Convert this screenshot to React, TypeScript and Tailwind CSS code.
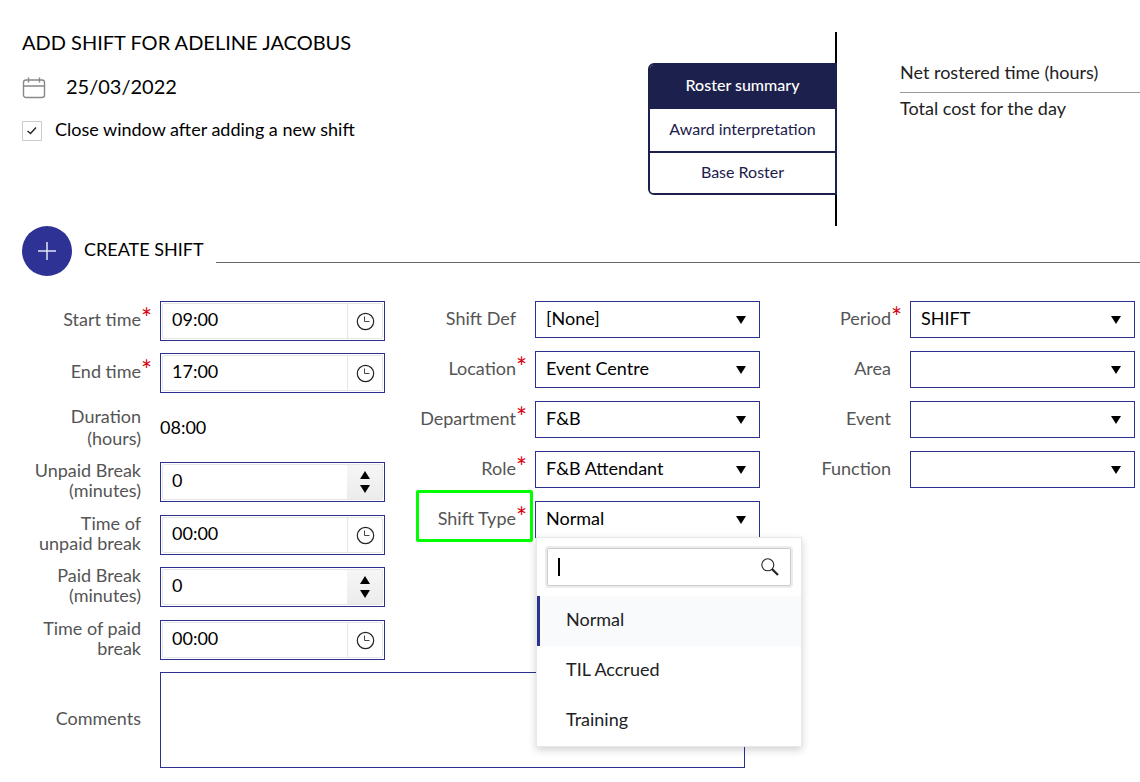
import { useState } from "react";
import type { ReactNode } from "react";

const SHIFT_TYPES = ["Normal", "TIL Accrued", "Training"];

const TABS = ["Roster summary", "Award interpretation", "Base Roster"];

interface FieldProps {
  id: string;
  label: string;
  required?: boolean;
  children: ReactNode;
}

function FieldLabel({ id, label, required }: Omit<FieldProps, "children">) {
  return (
    <label htmlFor={id} className="relative -mt-1 w-[131px] shrink-0 pl-4 text-right leading-5 text-[#555]">
      {label}
      {required && (
        <span aria-hidden="true" className="absolute -top-px left-full text-[26px] leading-5 text-[#d8000c]">
          *
        </span>
      )}
    </label>
  );
}

function Field({ id, label, required, children }: FieldProps) {
  return (
    <div className="flex items-center gap-[19px]">
      <FieldLabel id={id} label={label} required={required} />
      <div className="relative min-w-0 flex-1">{children}</div>
    </div>
  );
}

function Triangle({ up }: { up?: boolean }) {
  return (
    <svg width="10" height="8" viewBox="0 0 10 8" aria-hidden="true">
      <path d={up ? "M0 8L5 0L10 8Z" : "M0 0H10L5 8Z"} fill="#000" />
    </svg>
  );
}

function ClockIcon() {
  return (
    <svg width="19" height="19" viewBox="0 0 19 19" fill="none" stroke="#222" aria-hidden="true">
      <circle cx="9.5" cy="9.5" r="8.2" strokeWidth="1.2" />
      <path d="M8.5 4.5V9.5H13.5" stroke="#444" />
    </svg>
  );
}

function TimeField({ id, label, required, initial }: { id: string; label: string; required?: boolean; initial: string }) {
  const [value, setValue] = useState(initial);
  return (
    <Field id={id} label={label} required={required}>
      <div className="h-10 border border-[#2b3091] p-px">
        <div className="flex h-full rounded-xs border border-[#e6e6e6]">
          <input
            id={id}
            type="text"
            required={required}
            value={value}
            onChange={(e) => setValue(e.target.value)}
            className="min-w-0 flex-1 px-[9px] pb-1 outline-none"
          />
          <button
            type="button"
            aria-label={`Pick ${label.toLowerCase()}`}
            className="flex w-[35px] items-center justify-center border-l border-[#e6e6e6]"
          >
            <ClockIcon />
          </button>
        </div>
      </div>
    </Field>
  );
}

function MinutesField({ id, label }: { id: string; label: string }) {
  const [value, setValue] = useState(0);
  return (
    <Field id={id} label={label}>
      <div className="h-10 border border-[#2b3091] p-px">
        <div className="flex h-full rounded-xs border border-[#e6e6e6]">
          <input
            id={id}
            type="text"
            inputMode="numeric"
            value={value}
            onChange={(e) => setValue(Number(e.target.value) || 0)}
            className="min-w-0 flex-1 px-[9px] pb-1 outline-none"
          />
          <div className="flex w-[35px] flex-col bg-linear-to-b from-[#f6f6f6] to-[#ececec]">
            <button
              type="button"
              aria-label="Increase minutes"
              onClick={() => setValue((v) => v + 1)}
              className="flex flex-1 items-end justify-center pb-[3px]"
            >
              <Triangle up />
            </button>
            <button
              type="button"
              aria-label="Decrease minutes"
              onClick={() => setValue((v) => Math.max(0, v - 1))}
              className="flex flex-1 items-start justify-center pt-[3px]"
            >
              <Triangle />
            </button>
          </div>
        </div>
      </div>
    </Field>
  );
}

function SelectField({ id, label, required, option = "" }: { id: string; label: string; required?: boolean; option?: string }) {
  return (
    <Field id={id} label={label} required={required}>
      <select
        id={id}
        required={required}
        className="block h-[37px] w-full appearance-none border border-[#2b3091] bg-white px-[10px] pb-[3px] outline-none"
      >
        <option>{option}</option>
      </select>
      <span className="pointer-events-none absolute inset-y-0 right-[14px] flex items-center">
        <Triangle />
      </span>
    </Field>
  );
}

function ShiftTypeField() {
  const [value, setValue] = useState("Normal");
  const [query, setQuery] = useState("");
  const [open, setOpen] = useState(true);

  const matches = SHIFT_TYPES.filter((t) => t.toLowerCase().includes(query.toLowerCase()));

  return (
    <div className="relative">
      <div className="absolute -top-[11px] -bottom-1 left-[31px] w-[117px] rounded-xs border-3 border-[#00ff00]" />
      <Field id="shift-type" label="Shift Type" required>
        <select
          id="shift-type"
          required
          value={value}
          onChange={(e) => setValue(e.target.value)}
          onMouseDown={(e) => {
            e.preventDefault();
            setOpen((o) => !o);
          }}
          className="block h-[37px] w-full appearance-none border border-[#2b3091] bg-white px-[10px] pb-[3px] outline-none"
        >
          {SHIFT_TYPES.map((type) => (
            <option key={type}>{type}</option>
          ))}
        </select>
        <span className="pointer-events-none absolute inset-y-0 right-[14px] flex items-center">
          <Triangle />
        </span>

        {open && (
          <div className="absolute top-9 left-px z-10 w-[266px] border border-[#e8e8e8] bg-white shadow-[0_3px_8px_rgba(0,0,0,0.18)]">
            <div className="relative m-[10px] flex h-[38px] items-center rounded-xs border border-[#ccc] pr-[11px] shadow-[0_0_0_2px_#ececec]">
              <input
                type="text"
                aria-label="Search shift types"
                value={query}
                onChange={(e) => setQuery(e.target.value)}
                className="min-w-0 flex-1 px-[10px] outline-none"
              />
              {query === "" && <span className="pointer-events-none absolute left-[10px] h-[18px] w-[2px] bg-black" />}
              <svg width="18" height="18" viewBox="0 0 18 18" fill="none" stroke="#222" aria-hidden="true">
                <circle cx="6.8" cy="6.8" r="6" strokeWidth="1.1" />
                <path d="M11 11L17 17" strokeWidth="2.2" />
              </svg>
            </div>
            <ul role="listbox" aria-label="Shift types" className="text-[#222]">
              {matches.map((type) => (
                <li
                  key={type}
                  role="option"
                  aria-selected={type === value}
                  onClick={() => {
                    setValue(type);
                    setOpen(false);
                  }}
                  className={`flex h-[50px] cursor-pointer items-center border-l-[3px] pb-1 pl-[26px] ${
                    type === value ? "border-[#2b3091] bg-[#f8fafc]" : "border-transparent"
                  }`}
                >
                  {type}
                </li>
              ))}
            </ul>
          </div>
        )}
      </Field>
    </div>
  );
}

function RosterTabs() {
  const [active, setActive] = useState("Roster summary");
  return (
    <div className="w-[189px] shrink-0 border-r-2 border-black py-[31px]">
      <div
        role="tablist"
        aria-orientation="vertical"
        className="-mr-[2px] divide-y-2 divide-[#1b204d] overflow-hidden rounded-l-md border-2 border-[#1b204d] text-base"
      >
        {TABS.map((tab) => (
          <button
            key={tab}
            type="button"
            role="tab"
            aria-selected={tab === active}
            onClick={() => setActive(tab)}
            className={`block h-11 w-full pb-[3px] last:h-10 ${
              tab === active ? "bg-[#1b204d] font-medium text-white" : "bg-white text-[#1b204d]"
            }`}
          >
            {tab}
          </button>
        ))}
      </div>
    </div>
  );
}

export default function App() {
  const [closeAfter, setCloseAfter] = useState(true);

  return (
    <main className="bg-white pb-[14px] font-['Lato','Liberation_Sans',sans-serif] text-lg text-black">
      <header className="flex items-start pt-8">
        <div className="min-w-0 flex-1 pl-[22px]">
          <h1 className="text-xl leading-5">ADD SHIFT FOR ADELINE JACOBUS</h1>
          <div className="mt-[25px] flex items-center gap-5 text-xl leading-6">
            <svg width="24" height="22" viewBox="0 0 24 22" fill="none" stroke="#888" strokeWidth="1.4" aria-hidden="true">
              <rect x="1.5" y="3" width="21" height="17.5" rx="2.5" />
              <path d="M1.5 9H22.5M6.5 0.5V5.5M17.5 0.5V5.5" />
            </svg>
            <time dateTime="2022-03-25" className="-mt-1">25/03/2022</time>
          </div>
          <div className="mt-[22px] flex items-center gap-[13px] leading-6">
            <span className="relative size-5">
              <input
                id="close-after"
                type="checkbox"
                checked={closeAfter}
                onChange={(e) => setCloseAfter(e.target.checked)}
                className="block size-5 appearance-none border border-[#ccc]"
              />
              {closeAfter && (
                <svg
                  viewBox="0 0 20 20"
                  fill="none"
                  stroke="#222"
                  strokeWidth="1.3"
                  aria-hidden="true"
                  className="pointer-events-none absolute inset-0"
                >
                  <path d="M5.5 10L8.5 12.5L14 6.5" />
                </svg>
              )}
            </span>
            <label htmlFor="close-after" className="-mt-1">
              Close window after adding a new shift
            </label>
          </div>
        </div>

        <RosterTabs />

        <div className="w-[303px] shrink-0 pt-[22px] pl-[63px] leading-9 text-[#222]">
          <p className="border-b border-[#999] pb-[2px]">Net rostered time (hours)</p>
          <p className="leading-[30px]">Total cost for the day</p>
        </div>
      </header>

      <div className="flex items-center">
        <button
          type="button"
          aria-label="Create shift"
          className="ml-[22px] flex size-[50px] items-center justify-center rounded-full bg-[#2f3295]"
        >
          <svg width="18" height="18" viewBox="0 0 18 18" stroke="#e4e4f4" strokeWidth="1.5" aria-hidden="true">
            <path d="M9 0V18M0 9H18" />
          </svg>
        </button>
        <h2 className="-mt-1 ml-3 text-lg">CREATE SHIFT</h2>
        <div className="ml-3 h-6 flex-1 border-b border-[#666]" />
      </div>

      <form className="mt-[25px] grid grid-cols-3 items-start gap-y-3 pr-[5px] pl-[10px]">
        <div className="space-y-[13px]">
          <div className="space-y-3">
            <TimeField id="start-time" label="Start time" required initial="09:00" />
            <TimeField id="end-time" label="End time" required initial="17:00" />
            <div className="flex items-center gap-[19px]">
              <span id="duration-label" className="w-[131px] pl-10 text-right leading-[22px] text-[#555]">
                Duration (hours)
              </span>
              <output aria-labelledby="duration-label">08:00</output>
            </div>
          </div>
          <MinutesField id="unpaid-break" label="Unpaid Break (minutes)" />
          <div className="space-y-3">
            <TimeField id="unpaid-break-time" label="Time of unpaid break" initial="00:00" />
            <MinutesField id="paid-break" label="Paid Break (minutes)" />
          </div>
          <TimeField id="paid-break-time" label="Time of paid break" initial="00:00" />
        </div>

        <div className="space-y-[13px]">
          <SelectField id="shift-def" label="Shift Def" option="[None]" />
          <SelectField id="location" label="Location" required option="Event Centre" />
          <SelectField id="department" label="Department" required option="F&B" />
          <SelectField id="role" label="Role" required option="F&B Attendant" />
          <ShiftTypeField />
        </div>

        <div className="space-y-[13px]">
          <SelectField id="period" label="Period" required option="SHIFT" />
          <SelectField id="area" label="Area" />
          <SelectField id="event" label="Event" />
          <SelectField id="function" label="Function" />
        </div>

        <div className="col-span-2 pr-[15px]">
          <Field id="comments" label="Comments">
            <textarea id="comments" className="block h-24 w-full resize-none border border-[#2b3091] px-[10px] outline-none" />
          </Field>
        </div>
      </form>
    </main>
  );
}
